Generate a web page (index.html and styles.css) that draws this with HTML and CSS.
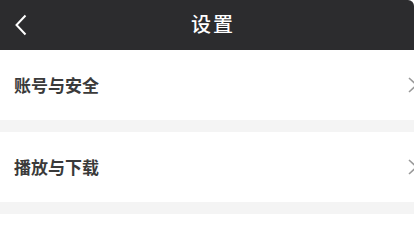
FILE: index.html
```html
<!DOCTYPE html>
<html lang="zh-CN">
<head>
    <meta charset="UTF-8">
    <meta name="viewport" content="width=device-width, initial-scale=1.0">
    <title>设置</title>
    <link rel="stylesheet" href="styles.css">
</head>
<body class="mainBody">
    <div class="header">
        <span class="backBtn">
            <svg width="12" height="22" viewBox="0 0 12 22">
                <polyline points="10.5,1.5 1.5,11 10.5,20.5" fill="none" stroke="#fff" stroke-width="2"/>
            </svg>
        </span>
        <h1>设置</h1>
    </div>
    <div class="list">
        <div class="row">
            <span class="label">账号与安全</span>
            <span class="arrow">
                <svg width="10" height="16" viewBox="0 0 10 16">
                    <polyline points="1,1 8.5,8 1,15" fill="none" stroke="#999" stroke-width="1.6"/>
                </svg>
            </span>
        </div>
        <div class="gap"></div>
        <div class="row">
            <span class="label">播放与下载</span>
            <span class="arrow">
                <svg width="10" height="16" viewBox="0 0 10 16">
                    <polyline points="1,1 8.5,8 1,15" fill="none" stroke="#999" stroke-width="1.6"/>
                </svg>
            </span>
        </div>
        <div class="gap"></div>
    </div>
</body>
</html>
```

FILE: styles.css
```css
.mainBody {
    margin: 0;
    width: 414px;
    height: 226px;
    overflow: hidden;
    background-color: #fff;
    font-family: "Noto Sans CJK SC", "Liberation Sans", sans-serif;
}
.header {
    position: relative;
    height: 50px;
    display: flex;
    align-items: center;
    justify-content: center;
    padding-left: 12px;
    background-color: #2c2c2e;
    border-top-right-radius: 6px;
}
.header h1 {
    margin: 0 0 4px 0;
    font-size: 20px;
    font-weight: 500;
    color: #fff;
    letter-spacing: 2px;
}
.backBtn {
    position: absolute;
    left: 15px;
    top: 14px;
    display: flex;
}
.row {
    height: 70px;
    display: flex;
    align-items: center;
    justify-content: space-between;
    padding-left: 14px;
}
.label {
    font-size: 17px;
    font-weight: bold;
    color: #3a3a3a;
    margin-bottom: 2px;
}
.arrow {
    display: flex;
    margin-right: -4px;
}
.gap {
    height: 12px;
    background-color: #f4f4f4;
}
```
